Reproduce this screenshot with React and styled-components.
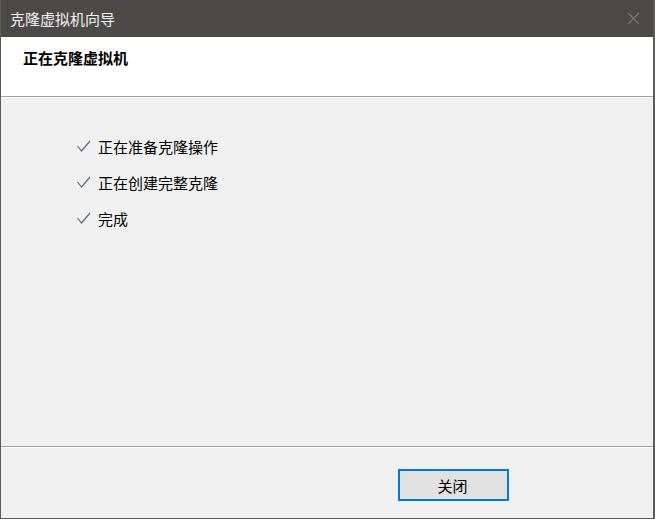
import React from "react";
import styled, { createGlobalStyle } from "styled-components";

const Global = createGlobalStyle`
  html, body { margin: 0; padding: 0; }
  body { font-family: "Noto Sans CJK SC", "Noto Sans", sans-serif; }
`;

const Window = styled.div`
  width: 655px;
  height: 519px;
  box-sizing: border-box;
  border-left: 1px solid #5b5b5b;
  border-right: 2px solid #5b5b5b;
  border-bottom: 1px solid #5b5b5b;
  display: flex;
  flex-direction: column;
  background: #f0f0f0;
  overflow: hidden;
`;

const TitleBar = styled.div`
  height: 37px;
  flex: none;
  background: #4b4a47;
  display: flex;
  align-items: center;
  justify-content: space-between;
  padding: 0 15px 0 10px;
  margin-left: -1px;
  margin-right: -2px;
`;

const TitleText = styled.span`
  color: #f2f2f2;
  font-size: 15px;
  line-height: 1;
  padding-bottom: 1px;
`;

const CloseIcon = styled.svg`
  width: 13px;
  height: 13px;
  display: block;
`;

const Header = styled.div`
  height: 59px;
  flex: none;
  background: #ffffff;
  display: flex;
  align-items: flex-start;
  padding: 10px 0 0 22px;
  box-sizing: border-box;
`;

const HeaderTitle = styled.span`
  font-size: 15px;
  font-weight: 700;
  color: #000;
`;

const Etched = styled.div`
  flex: none;
  height: 1px;
  background: #a0a0a0;
  border-bottom: 1px solid #ffffff;
`;

const Content = styled.div`
  flex: 1;
  padding: 30px 0 0 75px;
  display: flex;
  flex-direction: column;
`;

const Step = styled.div`
  height: 36px;
  display: flex;
  align-items: center;
  gap: 7px;
  font-size: 15px;
  color: #000;
`;

const Check = styled.svg`
  width: 15px;
  height: 14px;
  flex: none;
`;

const Footer = styled.div`
  height: 70px;
  flex: none;
  display: flex;
  justify-content: flex-end;
  align-items: flex-start;
  padding: 21px 144px 0 0;
  box-sizing: border-box;
`;

const Button = styled.button`
  width: 111px;
  height: 32px;
  border: 2px solid #0078d7;
  background: #e1e1e1;
  font-family: "Noto Sans CJK SC", "Noto Sans", sans-serif;
  font-size: 15px;
  color: #000;
  padding: 0 2px 0 0;
  margin: 0;
  cursor: pointer;
`;

const steps = ["正在准备克隆操作", "正在创建完整克隆", "完成"];

export default function App() {
  return (
    <>
      <Global />
      <Window>
        <TitleBar>
          <TitleText>克隆虚拟机向导</TitleText>
          <CloseIcon viewBox="0 0 13 13">
            <path d="M1 1 L12 12 M12 1 L1 12" stroke="#7c7a77" strokeWidth="1.1" fill="none" />
          </CloseIcon>
        </TitleBar>
        <Header>
          <HeaderTitle>正在克隆虚拟机</HeaderTitle>
        </Header>
        <Etched />
        <Content>
          {steps.map((s) => (
            <Step key={s}>
              <Check viewBox="0 0 15 14">
                <path d="M1.5 7 L5.5 12 L14 2" stroke="#5f6b78" strokeWidth="1.2" fill="none" />
              </Check>
              <span>{s}</span>
            </Step>
          ))}
        </Content>
        <Etched />
        <Footer>
          <Button>关闭</Button>
        </Footer>
      </Window>
    </>
  );
}
